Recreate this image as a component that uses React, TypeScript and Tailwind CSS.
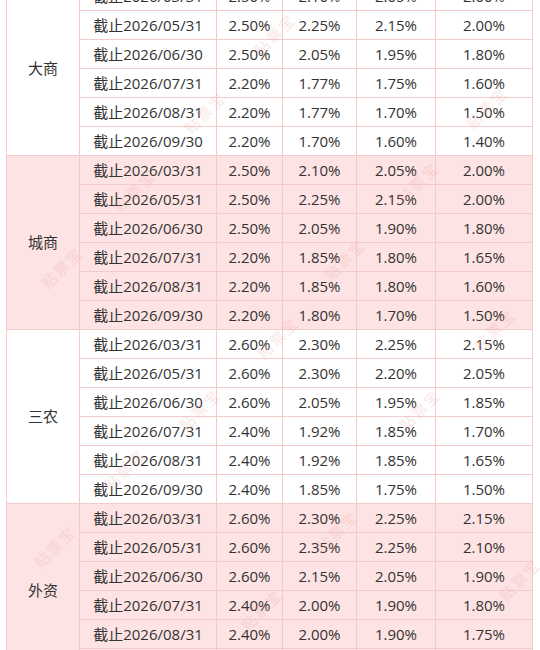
import React from "react";

type Row = { date: string; rates: string[] };
type Group = { name: string; pink: boolean; rows: Row[] };

const mk = (list: [string, string, string, string, string][]): Row[] =>
  list.map(([date, a, b, c, d]) => ({ date: `截止2026/${date}`, rates: [a, b, c, d] }));

const groups: Group[] = [
  {
    name: "大商",
    pink: false,
    rows: mk([
      ["03/31", "2.50%", "2.10%", "2.05%", "2.00%"],
      ["05/31", "2.50%", "2.25%", "2.15%", "2.00%"],
      ["06/30", "2.50%", "2.05%", "1.95%", "1.80%"],
      ["07/31", "2.20%", "1.77%", "1.75%", "1.60%"],
      ["08/31", "2.20%", "1.77%", "1.70%", "1.50%"],
      ["09/30", "2.20%", "1.70%", "1.60%", "1.40%"],
    ]),
  },
  {
    name: "城商",
    pink: true,
    rows: mk([
      ["03/31", "2.50%", "2.10%", "2.05%", "2.00%"],
      ["05/31", "2.50%", "2.25%", "2.15%", "2.00%"],
      ["06/30", "2.50%", "2.05%", "1.90%", "1.80%"],
      ["07/31", "2.20%", "1.85%", "1.80%", "1.65%"],
      ["08/31", "2.20%", "1.85%", "1.80%", "1.60%"],
      ["09/30", "2.20%", "1.80%", "1.70%", "1.50%"],
    ]),
  },
  {
    name: "三农",
    pink: false,
    rows: mk([
      ["03/31", "2.60%", "2.30%", "2.25%", "2.15%"],
      ["05/31", "2.60%", "2.30%", "2.20%", "2.05%"],
      ["06/30", "2.60%", "2.05%", "1.95%", "1.85%"],
      ["07/31", "2.40%", "1.92%", "1.85%", "1.70%"],
      ["08/31", "2.40%", "1.92%", "1.85%", "1.65%"],
      ["09/30", "2.40%", "1.85%", "1.75%", "1.50%"],
    ]),
  },
  {
    name: "外资",
    pink: true,
    rows: mk([
      ["03/31", "2.60%", "2.30%", "2.25%", "2.15%"],
      ["05/31", "2.60%", "2.35%", "2.25%", "2.10%"],
      ["06/30", "2.60%", "2.15%", "2.05%", "1.90%"],
      ["07/31", "2.40%", "2.00%", "1.90%", "1.80%"],
      ["08/31", "2.40%", "2.00%", "1.90%", "1.75%"],
      ["09/30", "2.40%", "1.95%", "1.85%", "1.70%"],
    ]),
  },
];

// faint "贴票宝" watermarks scattered over the table
const marks = [
  [275, 35], [205, 113], [135, 191], [62, 268], [487, 108], [418, 183],
  [345, 260], [278, 338], [495, 330], [420, 410], [200, 410], [125, 470],
  [55, 547], [337, 532], [262, 610], [520, 580],
];

export default function App() {
  return (
    <div
      className="relative h-[650px] w-[540px] overflow-hidden bg-white pl-[6px] text-[15px] text-[#333]"
      style={{ fontFamily: '"Open Sans", "Noto Sans CJK SC", sans-serif' }}
    >
      <div className="-mt-[18px] w-[527px] border-l border-[#f3caca]">
        {groups.map((g) => (
          <div key={g.name} className={`flex ${g.pink ? "bg-[#fde3e3]" : "bg-white"}`}>
            <div className="flex w-[73px] items-center justify-center border-r border-b border-[#f3caca]">
              {g.name}
            </div>
            <div className="flex flex-col">
              {g.rows.map((r) => (
                <div
                  key={r.date}
                  className="grid h-[29px] grid-cols-[137px_66px_74px_79px_97px] border-b border-[#f3caca]"
                >
                  <div className="flex items-center justify-center border-r border-[#f3caca]">{r.date}</div>
                  {r.rates.map((v, i) => (
                    <div key={i} className="flex items-center justify-center border-r border-[#f3caca]">
                      {v}
                    </div>
                  ))}
                </div>
              ))}
            </div>
          </div>
        ))}
      </div>

      <div className="pointer-events-none absolute inset-0">
        {marks.map(([x, y], i) => (
          <span
            key={i}
            className="absolute -translate-x-1/2 -translate-y-1/2 -rotate-45 text-[15px] tracking-[2px] whitespace-nowrap text-[#ec9f9f] opacity-25"
            style={{ left: x, top: y, fontFamily: '"Noto Sans CJK SC", serif' }}
          >
            贴票宝
          </span>
        ))}
      </div>
    </div>
  );
}
